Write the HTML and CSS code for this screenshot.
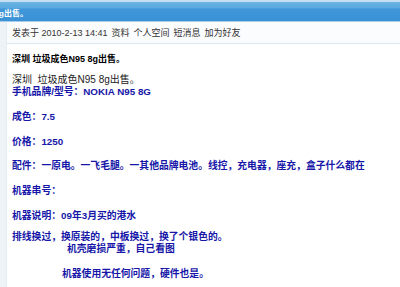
FILE: index.html
```html
<!DOCTYPE html>
<html>
<head>
	<title>深圳 垃圾成色N95 8g出售。</title>
	<meta charset="utf-8">
	<meta name="viewport" content="width=device-width, initial-scale=1.0">
	<link rel="stylesheet" href="styles.css">
</head>
<body>
	<div class="header">
		<span class="header-title">g出售。</span>
	</div>

	<div class="post">
		<div class="side"></div>
		<div class="main">
			<div class="meta">
				<span class="posted">发表于 2010-2-13 14:41</span>
				<a href="#">资料</a>
				<a href="#">个人空间</a>
				<a href="#">短消息</a>
				<a href="#">加为好友</a>
			</div>

			<div class="content">
				<h2 class="subject">深圳 垃圾成色N95 8g出售。</h2>
				<p class="intro">深圳&nbsp; 垃圾成色N95 8g出售。</p>
				<div class="blue">
					手机品牌/型号：NOKIA N95 8G<br><br>
					成色：7.5<br><br>
					价格：1250<br><br>
					配件：一原电。一飞毛腿。一其他品牌电池。线控，充电器，座充，盒子什么都在<br><br>
					机器串号：<br><br>
					机器说明：09年3月买的港水
					<div class="gap"></div>
					排线换过，换原装的，中板换过，换了个银色的。<br>
					<span class="indent-a">机壳磨损严重，自己看图</span><br><br>
					<span class="indent-b">机器使用无任何问题，硬件也是。</span>
				</div>
			</div>
		</div>
	</div>
</body>
</html>
```

FILE: styles.css
```css
*,*::after,*::before{
	box-sizing: border-box;
	margin: 0;
	padding: 0;
}

body{
	width: 400px;
	height: 287px;
	overflow: hidden;
	background-color: #fff;
	font-family: "Liberation Sans", "Noto Sans CJK SC", sans-serif;
	color: #333;
}

.header{
	height: 22px;
	background: linear-gradient(#c3dff0 0, #c3dff0 2px, #6cb4e4 2px, #58a8e0 8px, #3f96d8 9px, #3a92d6 21px, #a8cce8 21px);
	display: flex;
	align-items: center;
	padding-top: 3px;
}

.header-title{
	color: #fff;
	font-weight: bold;
	font-size: 8px;
	margin-left: -1px;
}

.post{
	display: flex;
	height: 265px;
}

.side{
	width: 7px;
	background-color: #eef3f8;
	border-right: 1px solid #e4ebf2;
}

.main{
	flex: 1;
}

.meta{
	height: 22px;
	display: flex;
	align-items: center;
	gap: 4px;
	padding-left: 5px;
	font-size: 9px;
	background-color: #fbfcfe;
	border-bottom: 1px solid #dbe6ef;
}

.meta a{
	color: #333;
	text-decoration: none;
}

.content{
	padding-left: 5px;
}

.subject{
	margin-top: 10px;
	font-size: 9px;
	color: #000;
	line-height: 11px;
}

.intro{
	margin-top: 9px;
	font-size: 10px;
	line-height: 12px;
	color: #222;
}

.blue{
	font-size: 9.8px;
	font-weight: bold;
	color: #1616a8;
	line-height: 12.4px;
}

.gap{
	height: 8.6px;
}

.indent-a{
	padding-left: 55px;
}

.indent-b{
	padding-left: 50px;
}
```
